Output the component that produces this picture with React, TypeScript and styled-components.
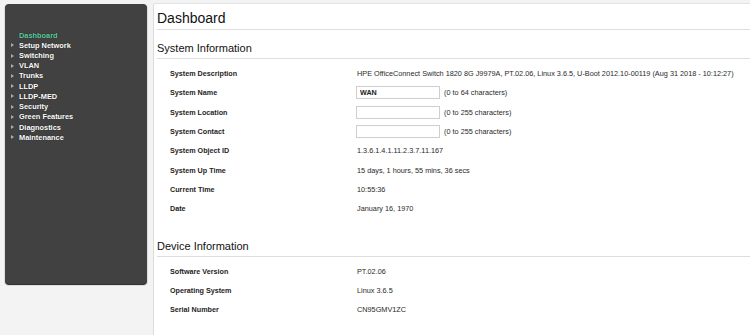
import React from "react";
import styled, { createGlobalStyle } from "styled-components";

const GlobalStyle = createGlobalStyle`
  html, body {
    margin: 0;
    padding: 0;
    background: #f3f3f3;
  }
  body {
    font-family: "Liberation Sans", Arial, sans-serif;
    color: #222;
  }
`;

const Page = styled.div`
  display: flex;
  align-items: flex-start;
  padding: 3px 0 0 5px;
  height: 335px;
  box-sizing: border-box;
  overflow: hidden;
`;

const Sidebar = styled.nav`
  width: 142px;
  height: 280px;
  margin-top: 1px;
  padding-top: 26px;
  box-sizing: border-box;
  background: #414141;
  border-radius: 4px;
  box-shadow: 0 1px 1px #1c1c1c;
  flex-shrink: 0;
`;

const MenuItem = styled.div<{ $active?: boolean }>`
  display: flex;
  align-items: center;
  height: 10.23px;
  padding-left: 6px;
  font-size: 7.4px;
  font-weight: bold;
  color: ${(p) => (p.$active ? "#5fcf9f" : "#ffffff")};
  text-shadow: 0 0 1px rgba(0, 0, 0, 0.8);
  white-space: nowrap;

  &::before {
    content: "";
    width: 0;
    height: 0;
    margin-right: 5px;
    border-left: 3px solid ${(p) => (p.$active ? "transparent" : "#aaaaaa")};
    border-top: 2px solid transparent;
    border-bottom: 2px solid transparent;
  }
`;

const Main = styled.main`
  flex: 1;
  margin-left: 6px;
  height: 332px;
  padding-left: 3px;
  background: #ffffff;
  border-left: 1px solid #dcdcdc;
  border-top: 1px solid #e2e2e2;
  border-top-left-radius: 3px;
  overflow: hidden;
`;

const PageTitle = styled.h1`
  margin: 0;
  padding: 6px 0 3px;
  font-size: 14px;
  line-height: 16px;
  font-weight: normal;
  color: #111;
  border-bottom: 1px solid #dddddd;
`;

const SectionTitle = styled.h2<{ $gap: number }>`
  margin: ${(p) => p.$gap}px 0 0;
  padding-bottom: 3px;
  font-size: 11px;
  line-height: 13px;
  font-weight: normal;
  color: #111;
  border-bottom: 1px solid #dddddd;
`;

const InfoTable = styled.div<{ $rowHeight: number }>`
  display: grid;
  grid-template-columns: 200px 1fr;
  grid-auto-rows: ${(p) => p.$rowHeight}px;
  margin-top: 5px;
  align-items: center;
`;

const Label = styled.div`
  padding-left: 13px;
  font-size: 7.2px;
  font-weight: bold;
  color: #1e1e1e;
  white-space: nowrap;
`;

const Value = styled.div`
  display: flex;
  align-items: center;
  font-size: 7.3px;
  color: #2a2a2a;
  white-space: nowrap;
`;

const TextInput = styled.input`
  width: 84px;
  height: 13px;
  box-sizing: border-box;
  margin: 0 4px 0 -1px;
  padding: 0 3px;
  border: 1px solid #cfcfcf;
  background: #fff;
  font-family: inherit;
  font-size: 7.2px;
  font-weight: bold;
  color: #222;
  outline: none;
`;

const menu = [
  "Setup Network",
  "Switching",
  "VLAN",
  "Trunks",
  "LLDP",
  "LLDP-MED",
  "Security",
  "Green Features",
  "Diagnostics",
  "Maintenance",
];

type Row = { label: string; value: string; input?: boolean; hint?: string };

const systemRows: Row[] = [
  {
    label: "System Description",
    value:
      "HPE OfficeConnect Switch 1820 8G J9979A, PT.02.06, Linux 3.6.5, U-Boot 2012.10-00119 (Aug 31 2018 - 10:12:27)",
  },
  { label: "System Name", value: "WAN", input: true, hint: "(0 to 64 characters)" },
  { label: "System Location", value: "", input: true, hint: "(0 to 255 characters)" },
  { label: "System Contact", value: "", input: true, hint: "(0 to 255 characters)" },
  { label: "System Object ID", value: "1.3.6.1.4.1.11.2.3.7.11.167" },
  { label: "System Up Time", value: "15 days, 1 hours, 55 mins, 36 secs" },
  { label: "Current Time", value: "10:55:36" },
  { label: "Date", value: "January 16, 1970" },
];

const deviceRows: Row[] = [
  { label: "Software Version", value: "PT.02.06" },
  { label: "Operating System", value: "Linux 3.6.5" },
  { label: "Serial Number", value: "CN95GMV1ZC" },
];

const Rows = ({ rows, rowHeight }: { rows: Row[]; rowHeight: number }) => (
  <InfoTable $rowHeight={rowHeight}>
    {rows.map((r) => (
      <React.Fragment key={r.label}>
        <Label>{r.label}</Label>
        <Value>
          {r.input ? (
            <>
              <TextInput defaultValue={r.value} />
              {r.hint}
            </>
          ) : (
            r.value
          )}
        </Value>
      </React.Fragment>
    ))}
  </InfoTable>
);

const App = () => {
  return (
    <>
      <GlobalStyle />
      <Page>
        <Sidebar>
          <MenuItem $active>Dashboard</MenuItem>
          {menu.map((m) => (
            <MenuItem key={m}>{m}</MenuItem>
          ))}
        </Sidebar>
        <Main>
          <PageTitle>Dashboard</PageTitle>
          <SectionTitle $gap={12}>System Information</SectionTitle>
          <Rows rows={systemRows} rowHeight={19.3} />
          <SectionTitle $gap={22}>Device Information</SectionTitle>
          <Rows rows={deviceRows} rowHeight={19} />
        </Main>
      </Page>
    </>
  );
};

export default App;
